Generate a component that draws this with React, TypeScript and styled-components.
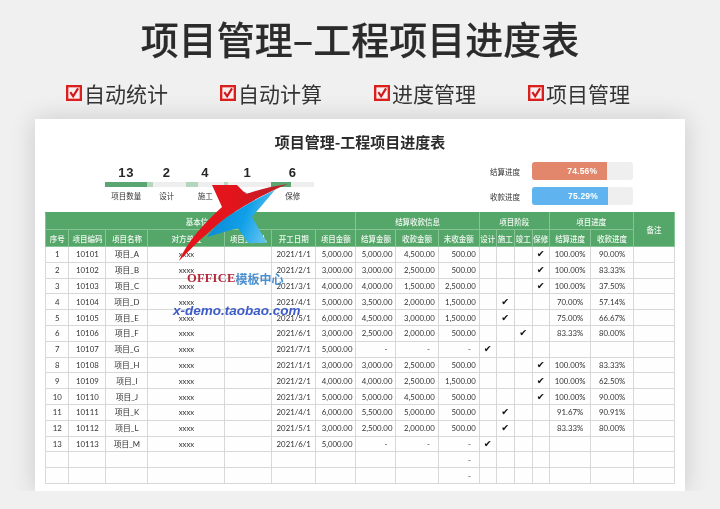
import React from "react";
import styled, { createGlobalStyle } from "styled-components";

const CJK = `"Noto Sans CJK SC", "Liberation Sans", sans-serif`;
const CELL = `Lato, "Noto Sans CJK SC", sans-serif`;

const Global = createGlobalStyle`
  html, body { margin: 0; padding: 0; background: #f0f0f0; }
  * { box-sizing: border-box; }
`;

const Page = styled.div`
  position: relative;
  width: 720px;
  height: 509px;
  overflow: hidden;
  background: #f0f0f0;
  font-family: ${CJK};
  filter: blur(0.3px);
`;

const Title = styled.h1`
  margin: 0;
  padding-top: 13px;
  height: 78px;
  text-align: center;
  font-size: 38px;
  line-height: 50px;
  font-weight: 500;
  color: #2b2b2b;
  -webkit-text-stroke: 0.2px #2b2b2b;
`;

const Features = styled.div`
  display: grid;
  grid-template-columns: repeat(4, 154px);
  padding-left: 66px;
  height: 30px;
`;

const Feature = styled.div`
  display: flex;
  align-items: center;
  gap: 2px;
  font-size: 21px;
  line-height: 28px;
  color: #333;
  font-weight: 400;
`;

const CardArea = styled.div`
  height: 403px;
  margin-top: -20px;
  padding: 31px 0 0 35px;
  overflow: hidden;
`;

const Card = styled.section`
  width: 650px;
  height: 373px;
  padding: 13px 0 0 10px;
  background: #fff;
  box-shadow: 0 0 24px rgba(0, 0, 0, 0.16);
`;

const SheetTitle = styled.h2`
  margin: 0;
  width: 630px;
  text-align: center;
  font-size: 15px;
  line-height: 20px;
  font-weight: 700;
  color: #2c2c2c;
`;

const Dash = styled.div`
  height: 60px;
  display: flex;
  justify-content: space-between;
  width: 588px;
`;

const Stats = styled.div`
  margin-left: 60.4px;
  padding-top: 13px;
  display: grid;
  grid-template-columns: 41.5px 39.5px 37.5px 47px 43.6px;
  width: 209.1px;
  align-content: start;
`;

const Stat = styled.div`
  display: flex;
  flex-direction: column;
  align-items: center;
`;

const StatNum = styled.div`
  font-family: "Liberation Sans", sans-serif;
  font-weight: 700;
  font-size: 13px;
  line-height: 16px;
  letter-spacing: 0.6px;
  color: #262626;
  height: 16px;
`;

const Track = styled.div`
  width: 100%;
  height: 5px;
  margin-top: 1px;
  background: #eeeeee;
`;

const Fill = styled.div<{ $dark?: boolean }>`
  height: 100%;
  background: ${(p) => (p.$dark ? "#5aa572" : "#b5d6bd")};
`;

const StatLabel = styled.div`
  margin-top: 3px;
  font-size: 7.5px;
  line-height: 12px;
  color: #333;
`;

const Progress = styled.div`
  padding-top: 10px;
  display: flex;
  flex-direction: column;
  gap: 7px;
  width: 143px;
`;

const ProgressRow = styled.div`
  display: flex;
  align-items: center;
  justify-content: space-between;
`;

const ProgressLabel = styled.div`
  font-size: 7.5px;
  color: #333;
`;

const ProgressTrack = styled.div`
  width: 101px;
  height: 18px;
  background: #efefef;
  border-radius: 3px;
  overflow: hidden;
`;

const ProgressFill = styled.div<{ $color: string }>`
  height: 100%;
  padding-right: 10px;
  background: ${(p) => p.$color};
  text-align: right;
  font-family: "Liberation Sans", sans-serif;
  font-weight: 700;
  font-size: 8.5px;
  letter-spacing: 0.2px;
  line-height: 18px;
  color: #fff;
`;

const Sheet = styled.table`
  width: 629px;
  table-layout: fixed;
  border-collapse: collapse;
  font-family: ${CELL};
  font-size: 7.8px;
  color: #333;
`;

const GroupHead = styled.th`
  height: 17px;
  padding: 0;
  background: #55a769;
  color: #f2f8f3;
  font-family: ${CJK};
  font-size: 7.5px;
  font-weight: 500;
  border: 1px solid #86c395;
  border-top-color: #55a769;
  overflow: hidden;
  white-space: nowrap;
`;

const Cell = styled.td<{ $align?: "left" | "right" | "center"; $dash?: boolean }>`
  height: 15.8px;
  padding: 0 ${(p) => (p.$dash ? "8px" : p.$align === "right" ? "3px" : "0")} 0 0;
  line-height: 12px;
  text-align: ${(p) => p.$align || "center"};
  border: 1px solid #d8d8d8;
  background: #fefefe;
  white-space: nowrap;
  overflow: hidden;
`;

const Mark = styled.span`
  font-family: "DejaVu Sans", sans-serif;
  font-size: 9.5px;
  color: #111;
`;

const Overlay = styled.div`
  position: absolute;
  inset: 0;
  pointer-events: none;
`;

const Logo = styled.svg`
  position: absolute;
  left: 170px;
  top: 175px;
`;

const Brand = styled.div`
  position: absolute;
  left: 187px;
  top: 270px;
  display: flex;
  align-items: center;
  height: 16px;
  white-space: nowrap;
`;

const BrandRed = styled.span`
  font-family: "Liberation Serif", serif;
  font-weight: 700;
  font-size: 12.5px;
  letter-spacing: 0.2px;
  color: #b5283a;
`;

const BrandBlue = styled.span`
  font-family: ${CJK};
  font-weight: 700;
  font-size: 12px;
  color: #4a8fd0;
`;

const Url = styled.div`
  position: absolute;
  left: 173px;
  top: 302px;
  font-family: "Liberation Sans", sans-serif;
  font-weight: 700;
  font-style: italic;
  font-size: 13.5px;
  line-height: 18px;
  color: #3d5cc6;
  white-space: nowrap;
`;

const CheckBox = () => (
  <svg width="16" height="16" viewBox="0 0 17 17">
    <rect x="0" y="0" width="17" height="17" fill="#d9201f" />
    <rect x="2.5" y="2.5" width="12" height="12" fill="#fbeeee" />
    <path d="M4.6 7.6 L7.6 12 L12.8 3.6" fill="none" stroke="#d0181c" strokeWidth="2.3" />
  </svg>
);

const widths = [23.4, 37, 42, 77, 47, 43.6, 40.4, 40, 42.4, 41, 17, 18, 18, 17, 41.6, 42.4, 41.6];
const subHeads = ["序号", "项目编码", "项目名称", "对方单位", "项目负责人", "开工日期", "项目金额", "结算金额", "收款金额", "未收金额", "设计", "施工", "竣工", "保修", "结算进度", "收款进度"];

type Row = [string, string, string, string | null, string | null, string | null, number, string, string];
const rows: Row[] = [
  ["A", "2021/1/1", "5,000.00", "5,000.00", "4,500.00", "500.00", 3, "100.00%", "90.00%"],
  ["B", "2021/2/1", "3,000.00", "3,000.00", "2,500.00", "500.00", 3, "100.00%", "83.33%"],
  ["C", "2021/3/1", "4,000.00", "4,000.00", "1,500.00", "2,500.00", 3, "100.00%", "37.50%"],
  ["D", "2021/4/1", "5,000.00", "3,500.00", "2,000.00", "1,500.00", 1, "70.00%", "57.14%"],
  ["E", "2021/5/1", "6,000.00", "4,500.00", "3,000.00", "1,500.00", 1, "75.00%", "66.67%"],
  ["F", "2021/6/1", "3,000.00", "2,500.00", "2,000.00", "500.00", 2, "83.33%", "80.00%"],
  ["G", "2021/7/1", "5,000.00", null, null, null, 0, "", ""],
  ["H", "2021/1/1", "3,000.00", "3,000.00", "2,500.00", "500.00", 3, "100.00%", "83.33%"],
  ["I", "2021/2/1", "4,000.00", "4,000.00", "2,500.00", "1,500.00", 3, "100.00%", "62.50%"],
  ["J", "2021/3/1", "5,000.00", "5,000.00", "4,500.00", "500.00", 3, "100.00%", "90.00%"],
  ["K", "2021/4/1", "6,000.00", "5,500.00", "5,000.00", "500.00", 1, "91.67%", "90.91%"],
  ["L", "2021/5/1", "3,000.00", "2,500.00", "2,000.00", "500.00", 1, "83.33%", "80.00%"],
  ["M", "2021/6/1", "5,000.00", null, null, null, 0, "", ""],
];

const Money = ({ v }: { v: string | null }) =>
  v === null ? <Cell $align="right" $dash>-</Cell> : <Cell $align="right">{v}</Cell>;

const stats = [
  { n: 13, label: "项目数量", dark: true },
  { n: 2, label: "设计" },
  { n: 4, label: "施工" },
  { n: 1, label: "竣工" },
  { n: 6, label: "保修", dark: true },
];

export default function App() {
  return (
    <Page>
      <Global />
      <Title>项目管理–工程项目进度表</Title>
      <Features>
        {["自动统计", "自动计算", "进度管理", "项目管理"].map((t) => (
          <Feature key={t}>
            <CheckBox />
            {t}
          </Feature>
        ))}
      </Features>
      <CardArea>
        <Card>
          <SheetTitle>项目管理-工程项目进度表</SheetTitle>
          <Dash>
            <Stats>
              {stats.map((s) => (
                <Stat key={s.label}>
                  <StatNum>{s.n}</StatNum>
                  <Track>
                    <Fill $dark={s.dark} style={{ width: `${(s.n / 13) * 100}%` }} />
                  </Track>
                  <StatLabel>{s.label}</StatLabel>
                </Stat>
              ))}
            </Stats>
            <Progress>
              <ProgressRow>
                <ProgressLabel>结算进度</ProgressLabel>
                <ProgressTrack>
                  <ProgressFill $color="#e2866c" style={{ width: "74.56%" }}>74.56%</ProgressFill>
                </ProgressTrack>
              </ProgressRow>
              <ProgressRow>
                <ProgressLabel>收款进度</ProgressLabel>
                <ProgressTrack>
                  <ProgressFill $color="#5fb4f0" style={{ width: "75.29%" }}>75.29%</ProgressFill>
                </ProgressTrack>
              </ProgressRow>
            </Progress>
          </Dash>
          <Sheet>
            <colgroup>
              {widths.map((w, i) => (
                <col key={i} style={{ width: w }} />
              ))}
            </colgroup>
            <thead>
              <tr>
                <GroupHead colSpan={7}>基本信息</GroupHead>
                <GroupHead colSpan={3}>结算收款信息</GroupHead>
                <GroupHead colSpan={4}>项目阶段</GroupHead>
                <GroupHead colSpan={2}>项目进度</GroupHead>
                <GroupHead rowSpan={2}>备注</GroupHead>
              </tr>
              <tr>
                {subHeads.map((h) => (
                  <GroupHead key={h}>{h}</GroupHead>
                ))}
              </tr>
            </thead>
            <tbody>
              {rows.map((r, i) => (
                <tr key={i}>
                  <Cell>{i + 1}</Cell>
                  <Cell>{10101 + i}</Cell>
                  <Cell>项目_{r[0]}</Cell>
                  <Cell>xxxx</Cell>
                  <Cell />
                  <Cell>{r[1]}</Cell>
                  <Cell $align="right">{r[2]}</Cell>
                  <Money v={r[3]} />
                  <Money v={r[4]} />
                  <Money v={r[5]} />
                  {[0, 1, 2, 3].map((k) => (
                    <Cell key={k}>{r[6] === k ? <Mark>✔</Mark> : null}</Cell>
                  ))}
                  <Cell>{r[7]}</Cell>
                  <Cell>{r[8]}</Cell>
                  <Cell />
                </tr>
              ))}
              {[0, 1].map((i) => (
                <tr key={i}>
                  {widths.map((_, k) => (
                    <Cell key={k} $align={k === 9 ? "right" : "center"} $dash={k === 9}>
                      {k === 9 ? "-" : null}
                    </Cell>
                  ))}
                </tr>
              ))}
            </tbody>
          </Sheet>
        </Card>
      </CardArea>
      <Overlay>
        <Logo width="125" height="95" viewBox="170 175 125 95">
          <defs>
            <linearGradient id="red" x1="0" x2="1" y1="0" y2="0">
              <stop offset="0.5" stopColor="#e3141b" />
              <stop offset="1" stopColor="#b5232f" />
            </linearGradient>
            <linearGradient id="blue" x1="0" x2="1" y1="0" y2="0.3">
              <stop offset="0" stopColor="#0f7fcb" />
              <stop offset="0.65" stopColor="#10a0e8" />
              <stop offset="1" stopColor="#5cc0ee" />
            </linearGradient>
          </defs>
          <path
            d="M179 261 C186 244 202 225 222 207 L212 185 L237 185 L246 194 C260 189 274 186 288 184 C268 192 250 202 233 213 C218 223 196 243 179 261 Z"
            fill="url(#red)"
          />
          <path
            d="M275 190 C258 198 238 209 223 220 C216 225 211 231 207 237 L238 228 L248 243 L267 243 L252 217 Z"
            fill="url(#blue)"
          />
        </Logo>
        <Brand>
          <BrandRed>OFFICE</BrandRed>
          <BrandBlue>模板中心</BrandBlue>
        </Brand>
        <Url>x-demo.taobao.com</Url>
      </Overlay>
    </Page>
  );
}
